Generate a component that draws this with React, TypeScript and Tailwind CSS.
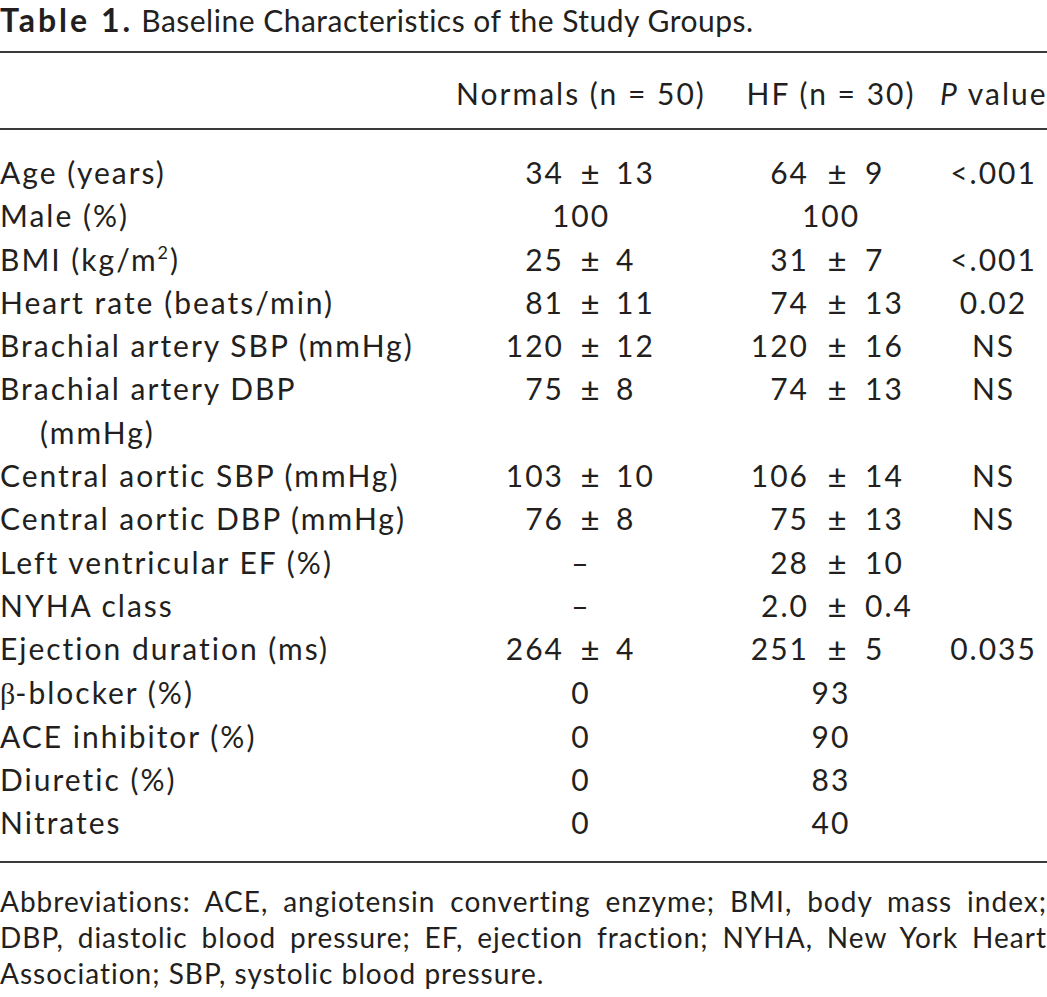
import React from 'react';

type Cell = string | [string, string];

interface Row {
  label: React.ReactNode;
  normals: Cell;
  hf: Cell;
  p?: string;
}

const rows: Row[] = [
  { label: 'Age (years)', normals: ['34', '13'], hf: ['64', '9'], p: '<.001' },
  { label: 'Male (%)', normals: '100', hf: '100' },
  {
    label: (
      <>
        BMI (kg/m<sup className="text-[18px] relative -top-[12px]">2</sup>)
      </>
    ),
    normals: ['25', '4'],
    hf: ['31', '7'],
    p: '<.001'
  },
  { label: 'Heart rate (beats/min)', normals: ['81', '11'], hf: ['74', '13'], p: '0.02' },
  { label: 'Brachial artery SBP (mmHg)', normals: ['120', '12'], hf: ['120', '16'], p: 'NS' },
  {
    label: (
      <>
        Brachial artery DBP
        <span className="block pl-[40px]">(mmHg)</span>
      </>
    ),
    normals: ['75', '8'],
    hf: ['74', '13'],
    p: 'NS'
  },
  { label: 'Central aortic SBP (mmHg)', normals: ['103', '10'], hf: ['106', '14'], p: 'NS' },
  { label: 'Central aortic DBP (mmHg)', normals: ['76', '8'], hf: ['75', '13'], p: 'NS' },
  { label: 'Left ventricular EF (%)', normals: '–', hf: ['28', '10'] },
  { label: 'NYHA class', normals: '–', hf: ['2.0', '0.4'] },
  { label: 'Ejection duration (ms)', normals: ['264', '4'], hf: ['251', '5'], p: '0.035' },
  {
    label: (
      <>
        <span className="font-['Liberation_Serif',serif] tracking-normal">β</span>-blocker (%)
      </>
    ),
    normals: '0',
    hf: '93'
  },
  { label: 'ACE inhibitor (%)', normals: '0', hf: '90' },
  { label: 'Diuretic (%)', normals: '0', hf: '83' },
  { label: 'Nitrates', normals: '0', hf: '40' }
];

function NormalsCell({ value }: { value: Cell }) {
  if (typeof value === 'string') {
    return <div className="text-center">{value}</div>;
  }
  return (
    <div className="flex">
      <span className="w-[124px] text-right">{value[0]}</span>
      <span className="w-[52px] text-center text-[33px] tracking-normal">±</span>
      <span>{value[1]}</span>
    </div>
  );
}

function HfCell({ value }: { value: Cell }) {
  if (typeof value === 'string') {
    return <div className="text-center">{value}</div>;
  }
  return (
    <div className="flex">
      <span className="w-[87px] text-right">{value[0]}</span>
      <span className="w-[56px] text-center text-[33px] tracking-normal">±</span>
      <span>{value[1]}</span>
    </div>
  );
}

export default function App() {
  return (
    <div className="w-[1047px] h-[997px] bg-white text-[#231f20] font-['Lato',sans-serif] text-[30px] tracking-[2px] overflow-hidden">
      <div className="pt-[2px] leading-[36px] whitespace-nowrap tracking-[0.5px]">
        <span className="font-bold text-[32px] tracking-[3px]">Table 1.</span> Baseline Characteristics of the Study
        Groups.
      </div>

      <div className="mt-[13px] h-[2px] bg-[#3a3a3a]" />

      <div className="grid grid-cols-[440px_282px_218px_107px] h-[75px] items-center pt-[5px] whitespace-nowrap">
        <div />
        <div className="text-center">Normals (n = 50)</div>
        <div className="text-center">HF (n = 30)</div>
        <div className="text-right">
          <span className="italic">P</span> value
        </div>
      </div>

      <div className="h-[2px] bg-[#3a3a3a]" />

      <div className="pt-[21px] leading-[43.3px]">
        {rows.map((row, i) => (
          <div key={i} className="grid grid-cols-[440px_282px_218px_107px] items-start whitespace-nowrap">
            <div>{row.label}</div>
            <NormalsCell value={row.normals} />
            <HfCell value={row.hf} />
            <div className="text-center">{row.p ?? ''}</div>
          </div>
        ))}
      </div>

      <div className="mt-[16px] h-[2px] bg-[#3a3a3a]" />

      <p className="mt-[20px] leading-[36px] text-[28px] tracking-[1px] text-justify">
        Abbreviations: ACE, angiotensin converting enzyme; BMI, body mass index; DBP, diastolic blood pressure; EF,
        ejection fraction; NYHA, New York Heart Association; SBP, systolic blood pressure.
      </p>
    </div>
  );
}
